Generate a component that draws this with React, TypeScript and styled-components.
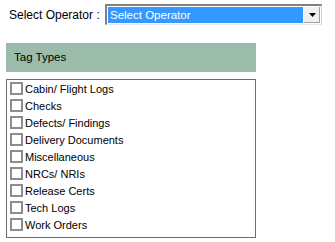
import styled, { createGlobalStyle } from "styled-components";

const GlobalStyle = createGlobalStyle`
  html, body {
    margin: 0;
    padding: 0;
    background: #ffffff;
  }
  body {
    font-family: "Liberation Sans", Arial, sans-serif;
    color: #000000;
  }
`;

const Page = styled.div`
  width: 335px;
  height: 242px;
  padding: 4px 0 0 6px;
  box-sizing: border-box;
`;

const OperatorRow = styled.div`
  display: flex;
  align-items: center;
  height: 21px;
`;

const Label = styled.span`
  font-size: 12px;
  padding-left: 3px;
  width: 96px;
  flex: none;
  white-space: nowrap;
`;

const Combo = styled.div`
  display: flex;
  width: 217px;
  height: 21px;
  box-sizing: border-box;
  border-top: 2px solid #808080;
  border-left: 2px solid #808080;
  border-right: 1px solid #d4d0c8;
  border-bottom: 1px solid #e8e8e8;
  background: #ffffff;
  padding: 1px;
`;

const ComboValue = styled.div`
  flex: 1;
  background: #3399ff;
  color: #ffffff;
  font-size: 11.5px;
  line-height: 17px;
  padding-left: 2px;
  white-space: nowrap;
`;

const ComboButton = styled.div`
  width: 16px;
  display: flex;
  align-items: center;
  justify-content: center;
  background: #f0f0f0;
  border-left: 1px solid #ffffff;
  box-shadow: inset -1px -1px 0 #a0a0a0;
`;

const Section = styled.div`
  width: 250px;
  margin-top: 18px;
`;

const SectionHeader = styled.div`
  height: 29px;
  background: #9bbcab;
  font-size: 11.5px;
  line-height: 29px;
  padding-left: 8px;
`;

const ListBox = styled.div`
  margin-top: 7px;
  height: 159px;
  box-sizing: border-box;
  border: 1px solid #6d6d6d;
  padding: 0 0 0 3px;
`;

const Item = styled.label`
  display: flex;
  align-items: center;
  height: 17px;
  font-size: 11px;
  white-space: nowrap;
`;

const Box = styled.span`
  width: 13px;
  height: 13px;
  box-sizing: border-box;
  border: 2px solid #8c8c8c;
  background: #ffffff;
  margin-right: 2px;
  flex: none;
`;

const tagTypes = [
  "Cabin/ Flight Logs",
  "Checks",
  "Defects/ Findings",
  "Delivery Documents",
  "Miscellaneous",
  "NRCs/ NRIs",
  "Release Certs",
  "Tech Logs",
  "Work Orders",
];

export default function App() {
  return (
    <Page>
      <GlobalStyle />
      <OperatorRow>
        <Label>Select Operator :</Label>
        <Combo>
          <ComboValue>Select Operator</ComboValue>
          <ComboButton>
            <svg width="7" height="4" viewBox="0 0 7 4">
              <path d="M0 0h7L3.5 4z" fill="#000" />
            </svg>
          </ComboButton>
        </Combo>
      </OperatorRow>
      <Section>
        <SectionHeader>Tag Types</SectionHeader>
        <ListBox>
          {tagTypes.map((t) => (
            <Item key={t}>
              <Box />
              {t}
            </Item>
          ))}
        </ListBox>
      </Section>
    </Page>
  );
}
